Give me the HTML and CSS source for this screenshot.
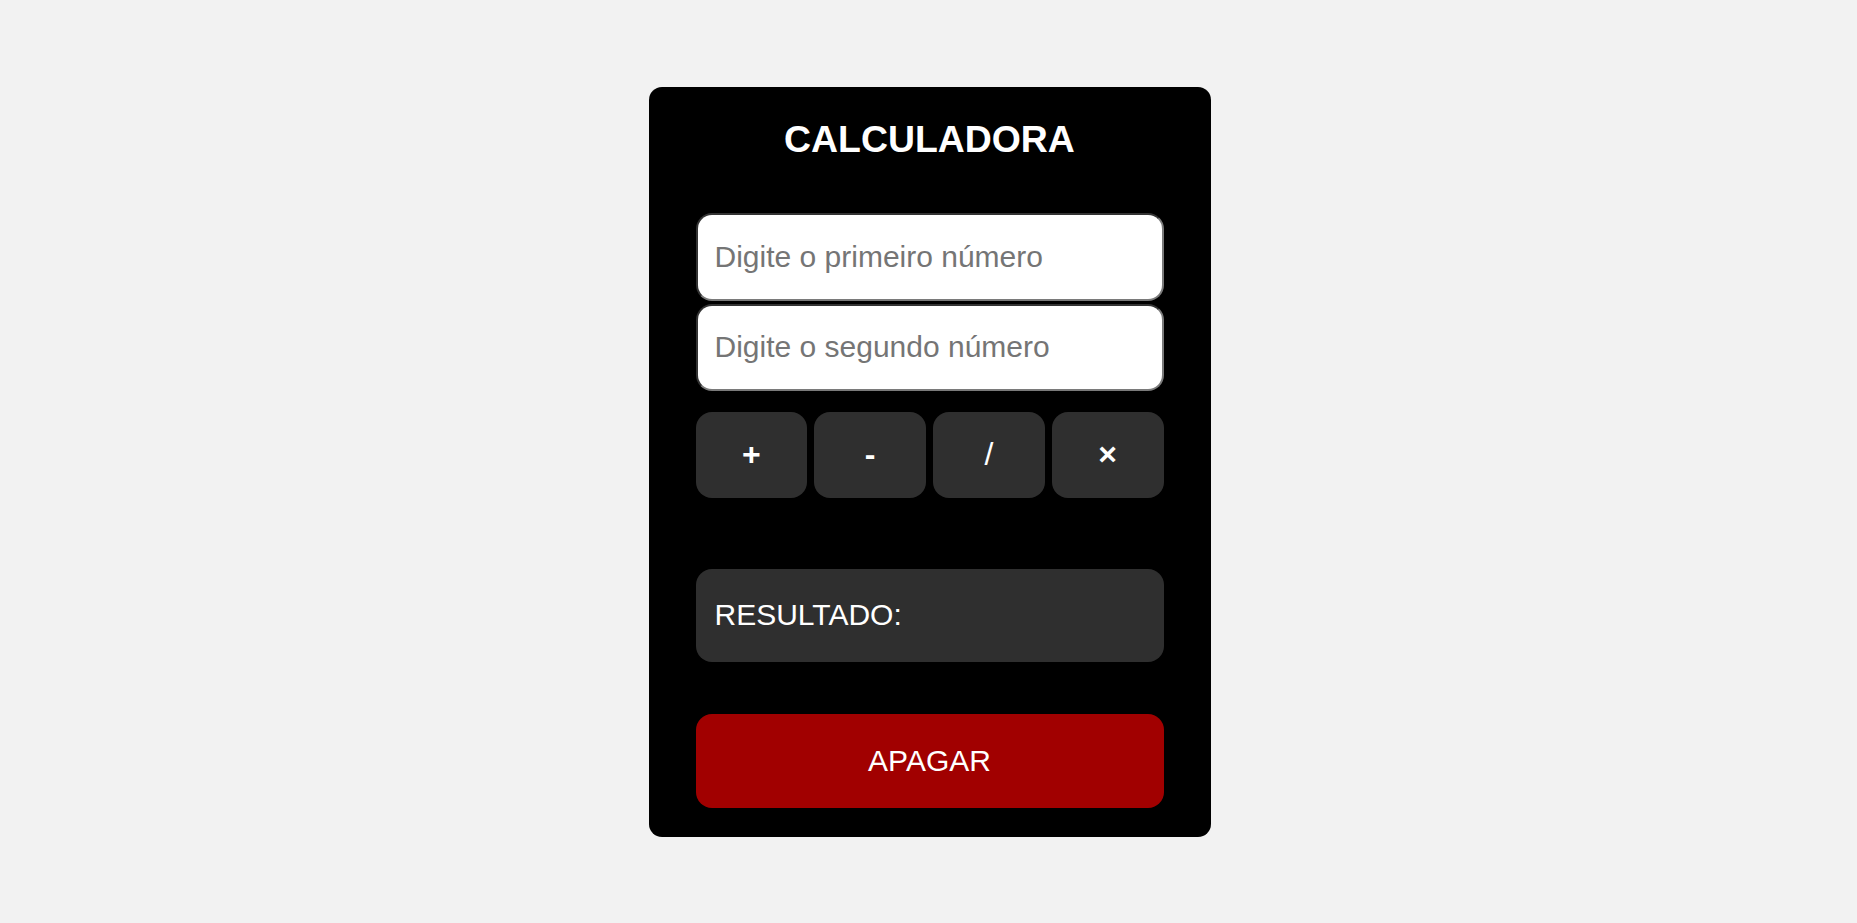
FILE: index.html
```html
<!DOCTYPE html>
<html lang="pt-BR">
<head>
<meta charset="UTF-8">
<title>Calculadora</title>
<link rel="stylesheet" href="styles.css">
</head>
<body>
  <main class="calc">
    <h1 class="calc-title">CALCULADORA</h1>
    <div class="fields">
      <input class="field" type="text" placeholder="Digite o primeiro número">
      <input class="field field-second" type="text" placeholder="Digite o segundo número">
    </div>
    <div class="ops">
      <button class="op">+</button>
      <button class="op">-</button>
      <button class="op op-thin">/</button>
      <button class="op">×</button>
    </div>
    <div class="result">RESULTADO:</div>
    <button class="clear">APAGAR</button>
  </main>
</body>
</html>
```
FILE: styles.css
```css
* { box-sizing: border-box; }
html, body { margin: 0; padding: 0; }
body {
  background: #f2f2f2;
  min-height: 100vh;
  display: flex;
  align-items: center;
  justify-content: center;
  padding-left: 2px;
  font-family: "Liberation Sans", Arial, sans-serif;
}
.calc {
  width: 562px;
  background: #000;
  border-radius: 13px;
  padding: 31px 47px 29px 47px;
  display: flex;
  flex-direction: column;
}
.calc-title {
  margin: 0;
  text-align: center;
  color: #fff;
  font-size: 37.4px;
  font-weight: bold;
  line-height: 42px;
}
.fields {
  margin-top: 53px;
  display: flex;
  flex-direction: column;
  gap: 3px;
}
.field {
  width: 100%;
  height: 88px;
  border: 2px solid #767676;
  border-color: #333 #7a7a7a #7a7a7a #333;
  border-radius: 16px;
  background: #fff;
  padding: 0 17px;
  font-family: "Liberation Sans", Arial, sans-serif;
  font-size: 30px;
  color: #000;
  outline: none;
}
.field-second { height: 87px; }
.field::placeholder { color: #757575; }
.ops {
  margin-top: 21px;
  display: grid;
  grid-template-columns: repeat(4, 1fr);
  gap: 7px;
}
.op {
  height: 86px;
  border: none;
  border-radius: 16px;
  background: #2f2f2f;
  color: #fff;
  font-family: "Liberation Sans", Arial, sans-serif;
  font-size: 32px;
  font-weight: bold;
  padding: 0;
}
.op-thin { font-weight: normal; }
.result {
  margin-top: 71px;
  height: 93px;
  border-radius: 16px;
  background: #2f2f2f;
  color: #fff;
  font-size: 30px;
  display: flex;
  align-items: center;
  padding: 0 19px;
}
.clear {
  margin-top: 52px;
  height: 94px;
  border: none;
  border-radius: 16px;
  background: #a10000;
  color: #fff;
  font-family: "Liberation Sans", Arial, sans-serif;
  font-size: 30px;
  padding: 0;
}
```
